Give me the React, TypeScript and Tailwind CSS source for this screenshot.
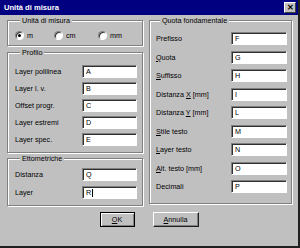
const profilo = [
  { label: 'Layer polilinea', value: 'A' },
  { label: 'Layer l. v.', value: 'B' },
  { label: 'Offset progr.', value: 'C' },
  { label: 'Layer estremi', value: 'D' },
  { label: 'Layer spec.', value: 'E' },
];

const ettometriche = [
  { label: 'Distanza', value: 'Q' },
  { label: 'Layer', value: 'R', caret: true },
];

// pre + underlined letter + post
const quota = [
  { pre: 'Prefisso', u: '', post: '', value: 'F' },
  { pre: '', u: 'Q', post: 'uota', value: 'G' },
  { pre: '', u: 'S', post: 'uffisso', value: 'H' },
  { pre: 'Distanza ', u: 'X', post: ' [mm]', value: 'I' },
  { pre: 'Distanza ', u: 'Y', post: ' [mm]', value: 'L' },
  { pre: '', u: 'S', post: 'tile testo', value: 'M' },
  { pre: '', u: 'L', post: 'ayer testo', value: 'N' },
  { pre: '', u: 'A', post: 'lt. testo [mm]', value: 'O' },
  { pre: 'Decimali', u: '', post: '', value: 'P' },
];

const group =
  'border border-[#808080] shadow-[inset_1px_1px_0_#fff,1px_1px_0_#fff]';

function Input({ value, caret, w }: { value: string; caret?: boolean; w: string }) {
  return (
    <div
      className={`flex h-[13px] items-center border border-[#808080] border-b-white border-r-white bg-white pl-[3px] shadow-[inset_1px_1px_0_#303030] ${w}`}
    >
      <span className="text-black">{value}</span>
      {caret && <span className="ml-[1px] h-[8px] w-[1px] bg-black" />}
    </div>
  );
}

function Radio({ checked, label, w }: { checked?: boolean; label: string; w: string }) {
  return (
    <div className={`flex items-center ${w}`}>
      <div className="flex h-[9px] w-[9px] items-center justify-center rounded-full border border-[#808080] border-b-white border-r-white bg-white shadow-[inset_1px_1px_0_#303030]">
        {checked && <div className="h-[3px] w-[3px] rounded-full bg-black" />}
      </div>
      <span className="ml-[3px]">{label}</span>
    </div>
  );
}

export default function App() {
  return (
    <div
      className="h-[248px] w-[300px] overflow-hidden border-b-2 border-r-2 border-b-[#202020] border-r-[#202020] bg-[#c0c0c0] text-[7.2px] leading-[9px] text-black"
      style={{ fontFamily: '"Liberation Sans", Arial, sans-serif' }}
    >
      <div className="flex h-[15px] items-center justify-between bg-[#000080] pl-[4px] pr-[2px]">
        <span className="text-[7.6px] font-bold text-white">Unità di misura</span>
        <div className="flex h-[11px] w-[12px] items-center justify-center border border-white border-b-[#404040] border-r-[#404040] bg-[#c0c0c0] text-[8px] font-bold leading-none">
          ✕
        </div>
      </div>

      <div className="flex gap-[6px] pl-[7px] pt-[1px]">
        <div className="flex w-[136px] flex-col">
          <fieldset className={`${group} h-[30px] pl-[7px] pt-[6px]`}>
            <legend className="ml-[5px] bg-[#c0c0c0] px-[2px]">Unità di misura</legend>
            <div className="flex h-[9px] items-center">
              <Radio checked label="m" w="w-[39px]" />
              <Radio label="cm" w="w-[44px]" />
              <Radio label="mm" w="w-[40px]" />
            </div>
          </fieldset>

          <fieldset className={`${group} mt-[2px] h-[105px] pl-[7px] pr-[5px] pt-[8px]`}>
            <legend className="ml-[5px] bg-[#c0c0c0] px-[2px]">Profilo</legend>
            <div className="flex flex-col gap-[4px]">
              {profilo.map((r) => (
                <div key={r.label} className="flex h-[13px] items-center justify-between">
                  <span>{r.label}</span>
                  <Input value={r.value} w="w-[55px]" />
                </div>
              ))}
            </div>
          </fieldset>

          <fieldset className={`${group} mt-[1px] h-[52px] pl-[7px] pr-[5px] pt-[5px]`}>
            <legend className="ml-[5px] bg-[#c0c0c0] px-[2px]">Ettometriche</legend>
            <div className="flex flex-col gap-[5px]">
              {ettometriche.map((r) => (
                <div key={r.label} className="flex h-[13px] items-center justify-between">
                  <span>{r.label}</span>
                  <Input value={r.value} caret={r.caret} w="w-[55px]" />
                </div>
              ))}
            </div>
          </fieldset>
        </div>

        <fieldset className={`${group} h-[188px] w-[143px] pl-[6px] pr-[4px] pt-[7px]`}>
          <legend className="ml-[4px] bg-[#c0c0c0] px-[2px]">Quota fondamentale</legend>
          <div className="flex flex-col gap-[5.5px]">
            {quota.map((r, i) => (
              <div key={i} className="flex h-[13px] items-center justify-between">
                <span>
                  {r.pre}
                  {r.u && <span className="underline">{r.u}</span>}
                  {r.post}
                </span>
                <Input value={r.value} w="w-[56px]" />
              </div>
            ))}
          </div>
        </fieldset>
      </div>

      <div className="mt-[6px] flex justify-center gap-[18px]">
        <button className="flex h-[15px] w-[35px] items-center justify-center border border-black bg-[#c0c0c0] shadow-[inset_1px_1px_0_#fff,inset_-1px_-1px_0_#808080]">
          <span className="underline">O</span>K
        </button>
        <button className="flex h-[15px] w-[46px] items-center justify-center border border-white border-b-[#202020] border-r-[#202020] bg-[#c0c0c0] shadow-[inset_-1px_-1px_0_#808080]">
          <span className="underline">A</span>nnulla
        </button>
      </div>
    </div>
  );
}
